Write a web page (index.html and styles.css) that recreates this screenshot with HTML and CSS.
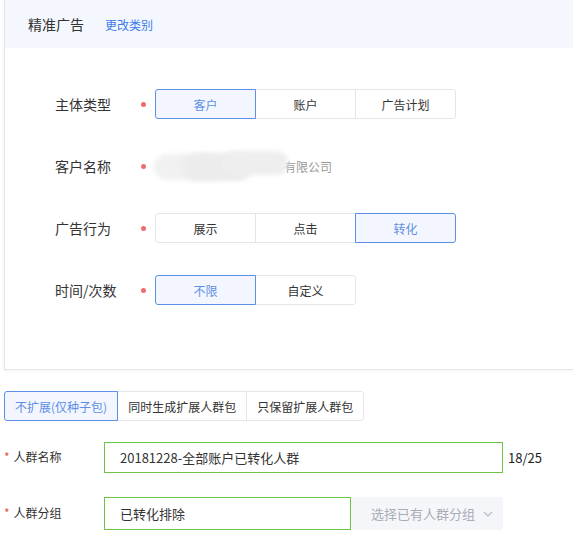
FILE: index.html
```html
<!DOCTYPE html>
<html lang="zh-CN">
<head>
  <meta charset="UTF-8" />
  <title>精准广告</title>
  <link rel="stylesheet" href="styles.css">
</head>
<body>
  <div class="page">
    <div class="card">
      <div class="card-head">
        <span class="head-title">精准广告</span>
        <a class="head-link" href="#">更改类别</a>
      </div>

      <div class="card-body">
        <div class="row">
          <div class="label">主体类型</div>
          <i class="dot"></i>
          <div class="btn-group">
            <button class="seg on">客户</button>
            <button class="seg">账户</button>
            <button class="seg">广告计划</button>
          </div>
        </div>

        <div class="row">
          <div class="label">客户名称</div>
          <i class="dot"></i>
          <div class="customer">
            <span class="mask"><span class="mask-a"></span><span class="mask-b"></span><span class="mask-c"></span></span>
            <span class="customer-name">有限公司</span>
          </div>
        </div>

        <div class="row">
          <div class="label">广告行为</div>
          <i class="dot"></i>
          <div class="btn-group">
            <button class="seg">展示</button>
            <button class="seg">点击</button>
            <button class="seg on">转化</button>
          </div>
        </div>

        <div class="row">
          <div class="label">时间/次数</div>
          <i class="dot"></i>
          <div class="btn-group">
            <button class="seg on">不限</button>
            <button class="seg">自定义</button>
          </div>
        </div>
      </div>
    </div>

    <div class="expand">
      <button class="tab on">不扩展(仅种子包)</button>
      <button class="tab">同时生成扩展人群包</button>
      <button class="tab">只保留扩展人群包</button>
    </div>

    <div class="field">
      <label class="field-label"><em>*</em>人群名称</label>
      <div class="input wide">20181228-全部账户已转化人群</div>
      <span class="count">18/25</span>
    </div>

    <div class="field">
      <label class="field-label"><em>*</em>人群分组</label>
      <div class="input short">已转化排除</div>
      <div class="select">
        选择已有人群分组
        <svg width="10" height="6" viewBox="0 0 10 6"><path d="M1 1l4 4 4-4" fill="none" stroke="#b4b8c2" stroke-width="1.1"/></svg>
      </div>
    </div>
  </div>
</body>
</html>
```

FILE: styles.css
```css
* {
  box-sizing: border-box;
}

body {
  margin: 0;
  background: #fff;
  color: #333;
  font-family: "Noto Sans CJK SC", "Noto Sans", sans-serif;
  overflow: hidden;
}

.page {
  padding-left: 4px;
}

/* card runs off the right edge in the original, so no right border */
.card {
  margin-top: -1px;
  border: 1px solid #e4e6ec;
  border-right: none;
  box-shadow: 0 1px 3px rgba(0, 0, 0, 0.06);
}

.card-head {
  height: 48px;
  background: #f4f7fe;
  display: flex;
  align-items: center;
  padding-left: 23px;
}

.head-title {
  font-size: 14px;
  color: #333;
}

.head-link {
  margin-left: 21px;
  font-size: 12px;
  color: #3e7ced;
  text-decoration: none;
}

.card-body {
  padding: 41px 0 64px;
  display: flex;
  flex-direction: column;
  gap: 32px;
}

.row {
  display: flex;
  align-items: center;
  height: 30px;
}

.label {
  width: 136px;
  padding-left: 50px;
  font-size: 14px;
  color: #333;
}

.dot {
  width: 5px;
  height: 5px;
  border-radius: 50%;
  background: #f06b6b;
  margin-right: 9px;
}

.btn-group {
  display: flex;
}

.seg {
  width: 101px;
  height: 30px;
  margin: 0;
  margin-left: -1px;
  padding: 0;
  border: 1px solid #e3e5ea;
  background: #fff;
  color: #333;
  font-family: inherit;
  font-size: 12px;
  cursor: pointer;
}

.seg:first-child {
  margin-left: 0;
  border-radius: 3px 0 0 3px;
}

.seg:last-child {
  border-radius: 0 3px 3px 0;
}

.seg.on {
  position: relative;
  border-color: #5d8fe6;
  background: #f3f6fe;
  color: #5d8fe6;
}

.customer {
  display: flex;
  align-items: center;
  margin-left: -3px;
}

.mask {
  position: relative;
  width: 136px;
  height: 30px;
}

.mask-a,
.mask-b,
.mask-c {
  position: absolute;
  filter: blur(2px);
  border-radius: 14px;
}

.mask-a {
  left: 2px;
  top: 3px;
  width: 70px;
  height: 26px;
  background: #f1f1f1;
}

.mask-b {
  left: 30px;
  top: 2px;
  width: 70px;
  height: 28px;
  background: #ececec;
}

.mask-c {
  left: 70px;
  top: 0;
  width: 66px;
  height: 24px;
  background: #eeeeee;
}

.customer-name {
  margin-left: -4px;
  font-size: 12px;
  color: #999;
}

.expand {
  display: flex;
  margin-top: 21px;
}

.tab {
  height: 30px;
  margin: 0;
  margin-left: -1px;
  padding: 0 10px;
  border: 1px solid #e3e5ea;
  background: #fff;
  color: #333;
  font-family: inherit;
  font-size: 12px;
}

.tab:first-child {
  margin-left: 0;
  border-radius: 3px 0 0 3px;
}

.tab:last-child {
  border-radius: 0 3px 3px 0;
}

.tab.on {
  position: relative;
  border-color: #5d8fe6;
  background: #f3f6fe;
  color: #5d8fe6;
}

.field {
  display: flex;
  align-items: center;
  margin-top: 21px;
}

.field + .field {
  margin-top: 24px;
}

.field-label {
  width: 100px;
  font-size: 12px;
  color: #333;
  margin-top: -3px;
}

.field-label em {
  font-style: normal;
  color: #e5544f;
  margin-right: 4px;
}

.input {
  height: 31px;
  display: flex;
  align-items: center;
  padding-left: 15px;
  border: 1px solid #6cc644;
  font-size: 13px;
  color: #333;
}

.input.wide {
  width: 399px;
}

.input.short {
  width: 247px;
  height: 33px;
}

.count {
  margin-left: 5px;
  font-size: 13px;
  color: #222;
}

.select {
  width: 152px;
  height: 33px;
  display: flex;
  align-items: center;
  gap: 8px;
  padding-left: 20px;
  background: #f5f6fa;
  border-radius: 0 3px 3px 0;
  font-size: 13px;
  color: #a9adb6;
}
```
